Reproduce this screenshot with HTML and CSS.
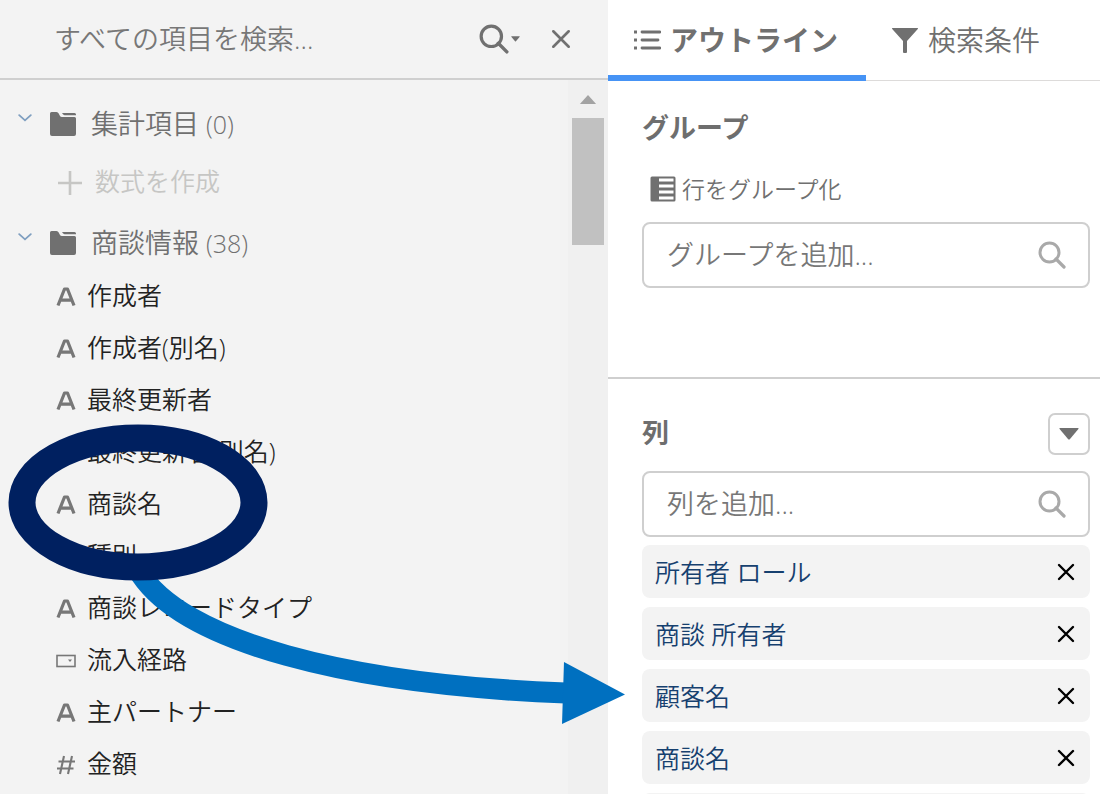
FILE: index.html
```html
<!DOCTYPE html>
<html lang="ja">
<head>
<meta charset="utf-8">
<meta name="viewport" content="width=device-width, initial-scale=1">
<title>レポートビルダー</title>
<link rel="stylesheet" href="styles.css">
</head>
<body>
<svg class="defs" aria-hidden="true">
  <symbol id="i-search" viewBox="0 0 28 28"><circle cx="11.5" cy="11.5" r="9.5" fill="none" stroke="currentColor" stroke-width="3"/><path d="M18 18l8 8" stroke="currentColor" stroke-width="3.2" stroke-linecap="round"/></symbol>
  <symbol id="i-close" viewBox="0 0 20 20"><path d="M3 3l14 14M17 3L3 17" stroke="currentColor" stroke-width="2.4" stroke-linecap="round"/></symbol>
  <symbol id="i-down" viewBox="0 0 20 12"><path d="M1 0h18q1 0 .4 1L11 11q-1 1-2 0L.6 1Q0 0 1 0z" fill="currentColor"/></symbol>
  <symbol id="i-chevron" viewBox="0 0 14 8"><path d="M1.200 1.200L7 6.400l5.800-5.200" fill="none" stroke="currentColor" stroke-width="1.800" stroke-linecap="round"/></symbol>
  <symbol id="i-folder" viewBox="0 0 28 26"><path d="M13 2h12.500q1.500 0 1.500 1.600v.6H15.500Q14 4 13 2z" fill="currentColor"/><path d="M2.500 1h5q1.500 0 2.200 1.500l1 2Q11.500 6 13 6h12.500Q27 6 27 7.500V23q0 2-2 2H3q-2 0-2-2V2.500Q1 1 2.500 1z" fill="currentColor"/></symbol>
  <symbol id="i-text" viewBox="0 0 20 20"><path d="M2 18.500L8.500 2h3L18 18.500M4.800 13.200h10.400" fill="none" stroke="currentColor" stroke-width="3.2" stroke-linejoin="round"/></symbol>
  <symbol id="i-pick" viewBox="0 0 20 14"><rect x="1" y="1.500" width="18" height="11" fill="none" stroke="currentColor" stroke-width="1.600"/><path d="M12 5.500h4l-2 2.500z" fill="currentColor"/></symbol>
  <symbol id="i-number" viewBox="0 0 20 20"><path d="M8 1L4 19M16 1l-4 18M2.500 6.500H19M1 13.500h16.500" fill="none" stroke="currentColor" stroke-width="2.100"/></symbol>
</svg>

<main class="builder">
  <section class="fields" aria-label="項目">
    <div class="fields-search">
      <input class="fields-input" type="text" aria-label="すべての項目を検索" placeholder="すべての項目を検索...">
      <button class="plain search-menu" type="button" aria-label="検索オプション"><svg class="ic-search"><use href="#i-search"/></svg><svg class="ic-caret"><use href="#i-down"/></svg></button>
      <button class="plain" type="button" aria-label="閉じる"><svg class="ic-close"><use href="#i-close"/></svg></button>
    </div>
    <div class="fields-body">
      <div class="tree">
        <button class="plain folder" type="button" aria-expanded="true"><svg class="ic-chevron"><use href="#i-chevron"/></svg><svg class="ic-folder"><use href="#i-folder"/></svg><span>集計項目 <span class="count">(0)</span></span></button>
        <button class="plain create" type="button"><svg class="ic-plus" viewBox="0 0 24 24"><path d="M12 0v24M0 12h24" stroke="currentColor" stroke-width="2.600"/></svg>数式を作成</button>
        <button class="plain folder" type="button" aria-expanded="true"><svg class="ic-chevron"><use href="#i-chevron"/></svg><svg class="ic-folder"><use href="#i-folder"/></svg><span>商談情報 <span class="count">(38)</span></span></button>
        <ul class="field-list">
          <li><svg class="ic-type"><use href="#i-text"/></svg>作成者</li>
          <li><svg class="ic-type"><use href="#i-text"/></svg>作成者(別名)</li>
          <li><svg class="ic-type"><use href="#i-text"/></svg>最終更新者</li>
          <li><svg class="ic-type"><use href="#i-text"/></svg>最終更新者(別名)</li>
          <li><svg class="ic-type"><use href="#i-text"/></svg>商談名</li>
          <li><svg class="ic-type"><use href="#i-pick"/></svg>種別</li>
          <li><svg class="ic-type"><use href="#i-text"/></svg>商談レコードタイプ</li>
          <li><svg class="ic-type"><use href="#i-pick"/></svg>流入経路</li>
          <li><svg class="ic-type"><use href="#i-text"/></svg>主パートナー</li>
          <li><svg class="ic-type"><use href="#i-number"/></svg>金額</li>
        </ul>
      </div>
      <div class="scrollbar" aria-hidden="true">
        <svg class="scroll-up" viewBox="0 0 18 10"><path d="M9 0l9 10H0z" fill="#a3a3a3"/></svg>
        <div class="scroll-thumb"></div>
      </div>
    </div>
  </section>

  <section class="outline" aria-label="アウトライン">
    <div class="tabs" role="tablist">
      <button class="plain tab active" type="button" role="tab" aria-selected="true"><svg class="ic-tab" viewBox="0 0 28 24"><path d="M9 4h18M9 12h16M9 20h18" stroke="currentColor" stroke-width="2.800" stroke-linecap="round"/><path d="M1 4h3M1 12h3M1 20h3" stroke="currentColor" stroke-width="3"/></svg>アウトライン</button>
      <button class="plain tab" type="button" role="tab" aria-selected="false"><svg class="ic-tab" viewBox="0 0 28 26"><path d="M1.500 1h25q1 0 .3 1L16 14v11q0 1-1 1h-2q-1 0-1-1V14L1.200 2Q.5 1 1.500 1z" fill="currentColor"/></svg>検索条件</button>
    </div>

    <div class="section groups">
      <h2>グループ</h2>
      <label class="group-label" for="add-group"><svg class="ic-rows" viewBox="0 0 26 26"><rect x=".5" y=".5" width="25" height="25" rx="1.500" fill="currentColor"/><path d="M9 4h14.500M9 10h14.500M9 16h14.500M9 22h14.500" stroke="#fff" stroke-width="3.200"/></svg>行をグループ化</label>
      <div class="lookup"><input id="add-group" type="text" placeholder="グループを追加..."><svg class="ic-lookup"><use href="#i-search"/></svg></div>
    </div>

    <div class="section columns">
      <div class="columns-head">
        <h2><label for="add-column">列</label></h2>
        <button class="plain menu-button" type="button" aria-label="列の操作"><svg class="ic-menu"><use href="#i-down"/></svg></button>
      </div>
      <div class="lookup"><input id="add-column" type="text" placeholder="列を追加..."><svg class="ic-lookup"><use href="#i-search"/></svg></div>
      <ul class="chips">
        <li>所有者 ロール<button class="plain remove" type="button" aria-label="所有者 ロールを削除"><svg class="ic-remove"><use href="#i-close"/></svg></button></li>
        <li>商談 所有者<button class="plain remove" type="button" aria-label="商談 所有者を削除"><svg class="ic-remove"><use href="#i-close"/></svg></button></li>
        <li>顧客名<button class="plain remove" type="button" aria-label="顧客名を削除"><svg class="ic-remove"><use href="#i-close"/></svg></button></li>
        <li>商談名<button class="plain remove" type="button" aria-label="商談名を削除"><svg class="ic-remove"><use href="#i-close"/></svg></button></li>
        <li></li>
      </ul>
    </div>
  </section>

  <svg class="callout" viewBox="0 0 640 320" aria-hidden="true">
    <path d="M138 154C180 226 350 269 566 277" fill="none" stroke="#0070c0" stroke-width="21"/>
    <path d="M564 246L625 278.500L562 308z" fill="#0070c0"/>
    <ellipse cx="138" cy="86.500" rx="116" ry="64.500" fill="none" stroke="#002060" stroke-width="27"/>
  </svg>
</main>
</body>
</html>
```

FILE: styles.css
```css
* {
  box-sizing: border-box;
}

body {
  margin: 0;
  font-family: "Open Sans", "Noto Sans CJK JP", sans-serif;
  font-size: 25px;
  font-weight: 350;
  line-height: 36px;
  color: #222;
  background: #fff;
}

svg {
  display: block;
  flex: none;
}

ul {
  list-style: none;
  margin: 0;
  padding: 0;
}

h2 {
  margin: 0;
  font-size: 27px;
  font-weight: 700;
  color: #6e6e6e;
}

input {
  min-width: 0;
  flex: 1;
  padding: 0;
  border: 0;
  outline: 0;
  background: transparent;
  font: inherit;
  font-size: 27px;
  color: #222;
}

input::placeholder {
  color: #777;
  opacity: 1;
}

.defs {
  position: absolute;
  width: 0;
  height: 0;
}

.plain {
  display: flex;
  align-items: center;
  padding: 0;
  border: 0;
  background: none;
  font: inherit;
  color: #707070;
  text-align: left;
}

.builder {
  position: relative;
  display: grid;
  grid-template-columns: minmax(0, 608fr) minmax(0, 492fr);
  height: 100vh;
  overflow: hidden;
}

/* Field tree */

.fields {
  display: flex;
  flex-direction: column;
  min-height: 0;
  background: #f3f3f3;
}

.fields-search {
  flex: none;
  display: flex;
  align-items: center;
  height: 80px;
  padding: 0 36px 0 54px;
  border-bottom: 2px solid #cfcfcf;
}

.search-menu {
  gap: 2px;
  margin-right: 30px;
}

.ic-search {
  width: 30px;
  height: 30px;
}

.ic-caret {
  width: 9px;
  height: 6px;
}

.ic-close {
  width: 22px;
  height: 22px;
}

.fields-body {
  flex: 1;
  min-height: 0;
  display: flex;
}

.tree {
  flex: 1;
  min-width: 0;
  overflow: hidden;
  padding-top: 15px;
}

.folder {
  width: 100%;
  height: 57px;
  padding-left: 18px;
  font-size: 27px;
}

.count {
  font-size: 25px;
}

.ic-chevron {
  width: 14px;
  height: 8px;
  margin: 0 17px 12px 0;
  color: #7f9fc0;
}

.ic-folder {
  width: 28px;
  height: 26px;
  margin-right: 14px;
}

.create {
  height: 62px;
  padding: 0 0 4px 58px;
  gap: 13px;
  color: #c6c6c4;
}

.ic-plus {
  width: 24px;
  height: 24px;
  margin-top: 4px;
}

.field-list li {
  display: flex;
  align-items: center;
  height: 52px;
  padding: 0 0 4px 56px;
  gap: 11px;
}

.ic-type {
  width: 20px;
  height: 20px;
  margin-top: 4px;
  color: #777;
}

.scrollbar {
  display: flex;
  flex-direction: column;
  align-items: center;
  gap: 14px;
  width: 40px;
  padding-top: 15px;
  background: #f0f0f0;
}

.scroll-up {
  width: 18px;
  height: 9px;
}

.scroll-thumb {
  width: 32px;
  height: 127px;
  background: #c1c1c1;
}

/* Outline panel */

.outline {
  min-width: 0;
  overflow: hidden;
}

.tabs {
  display: flex;
  height: 81px;
  box-shadow: inset 0 -1px #dddbda;
}

.tab {
  gap: 9px;
  padding: 5px 25px 0;
  border-bottom: 6px solid transparent;
  font-size: 28px;
  white-space: nowrap;
}

.tab.active {
  padding-right: 28px;
  border-bottom-color: #4693f5;
  font-weight: 700;
}

.ic-tab {
  width: 28px;
  height: 26px;
}

.section {
  padding: 0 10px 0 34px;
}

.groups {
  height: 298px;
  padding-top: 29px;
  border-bottom: 2px solid #cfcfcf;
}

.group-label {
  display: flex;
  align-items: center;
  gap: 6px;
  padding: 25px 0 15px 8px;
  font-size: 23px;
  color: #707070;
}

.ic-rows {
  width: 26px;
  height: 26px;
}

.lookup {
  display: flex;
  align-items: center;
  height: 66px;
  padding: 0 22px 0 23px;
  border: 2px solid #cfcfcf;
  border-radius: 8px;
}

.ic-lookup {
  width: 28px;
  height: 28px;
  color: #a9a9a9;
}

.columns {
  padding-top: 34px;
}

.columns-head {
  display: flex;
  align-items: center;
  justify-content: space-between;
  margin-bottom: 16px;
}

.columns-head h2 {
  padding-bottom: 3px;
}

.menu-button {
  justify-content: center;
  width: 42px;
  height: 42px;
  border: 2px solid #cfcfcf;
  border-radius: 7px;
}

.ic-menu {
  width: 20px;
  height: 12px;
}

.chips {
  display: grid;
  gap: 9px;
  margin-top: 8px;
}

.chips li {
  display: flex;
  align-items: center;
  justify-content: space-between;
  height: 53px;
  padding: 0 14px 0 13px;
  border-radius: 8px;
  background: #f3f3f3;
  color: #16406f;
}

.remove {
  color: #000;
}

.ic-remove {
  width: 20px;
  height: 20px;
}

/* Drawn over both panels */

.callout {
  position: absolute;
  left: 0;
  top: 416px;
  width: 640px;
  height: 320px;
  pointer-events: none;
}
```
